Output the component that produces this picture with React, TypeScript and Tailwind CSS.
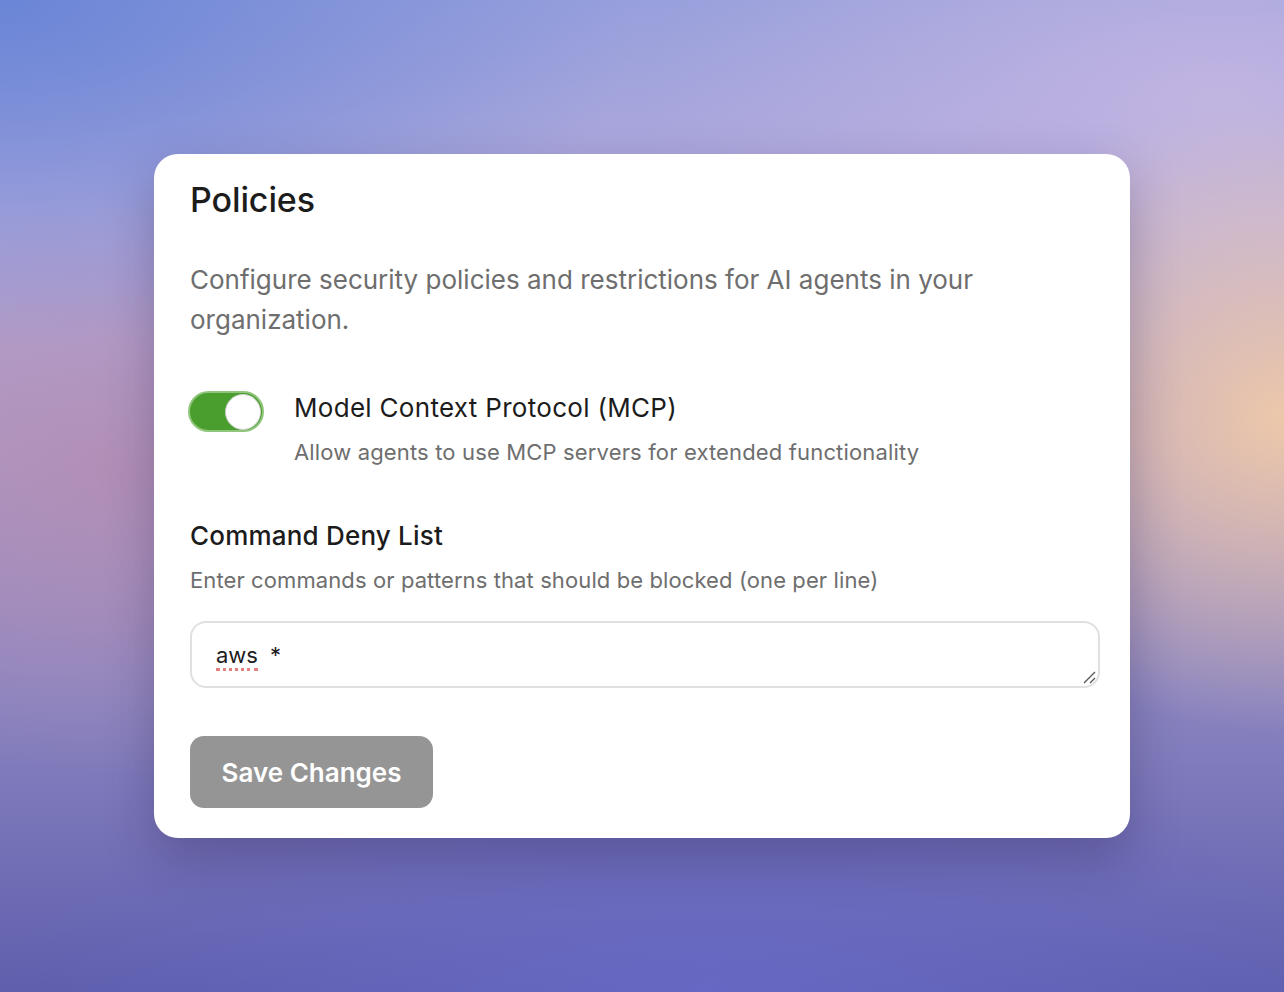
export default function App() {
  return (
    <div
      className="flex h-screen w-full items-center justify-center bg-[radial-gradient(ellipse_28%_32%_at_100%_42%,rgba(240,202,168,0.95),rgba(240,202,168,0)),radial-gradient(ellipse_50%_35%_at_0%_0%,rgba(104,132,214,0.95),rgba(104,132,214,0)),radial-gradient(ellipse_45%_30%_at_95%_10%,rgba(196,182,226,0.9),rgba(196,182,226,0)),radial-gradient(ellipse_35%_30%_at_10%_48%,rgba(178,140,178,0.8),rgba(178,140,178,0)),radial-gradient(ellipse_55%_25%_at_55%_100%,rgba(104,106,200,0.8),rgba(104,106,200,0)),linear-gradient(to_bottom,#98a0dc_0%,#b3aadc_22%,#b09cc8_45%,#8a84c0_70%,#5f5ead_100%)]"
      style={{ fontFamily: "Inter, 'Noto Sans', sans-serif" }}
    >
      <div className="flex h-[684px] w-[976px] flex-col rounded-[24px] bg-white px-[36px] pt-[26px] shadow-[0_20px_50px_rgba(30,20,70,0.28)]">
        <h1 className="text-[34px] leading-[40px] font-medium tracking-[-0.1px] text-[#1c1c1c]">Policies</h1>

        <p className="mt-[40px] w-[800px] text-[26px] leading-[40px] text-[#6e6e6e]">
          Configure security policies and restrictions for AI agents in your organization.
        </p>

        {/* MCP toggle */}
        <div className="mt-[51px] flex items-start">
          <button className="-ml-[2px] flex h-[41px] w-[76px] items-center justify-end rounded-full border-2 border-[#8fc67c] bg-[#4a9e2e] pr-[1px]">
            <span className="h-[36px] w-[36px] rounded-full border border-[#cfcfcf] bg-white" />
          </button>
          <div className="ml-[30px]">
            <div className="text-[26px] leading-[34px] tracking-[0.3px] text-[#1c1c1c]">Model Context Protocol (MCP)</div>
            <div className="mt-[12px] text-[22px] leading-[30px] tracking-[0.15px] text-[#6e6e6e]">
              Allow agents to use MCP servers for extended functionality
            </div>
          </div>
        </div>

        {/* Command deny list */}
        <div className="mt-[52px] text-[26px] leading-[34px] font-medium tracking-[0.2px] text-[#1c1c1c]">Command Deny List</div>
        <div className="mt-[12px] text-[22px] leading-[30px] tracking-[0.1px] text-[#6e6e6e]">
          Enter commands or patterns that should be blocked (one per line)
        </div>

        <div className="relative mt-[26px] h-[67px] w-[910px] rounded-[16px] border-2 border-[#e0e0e0] px-[24px] pt-[17px]">
          <div className="text-[22px] leading-[30px] text-[#1c1c1c]">
            <span className="inline-block border-b-[3px] border-dotted border-[#e48080] leading-[26px]">aws</span>
            <span className="ml-[12px]">*</span>
          </div>
          <svg className="absolute right-[2px] bottom-[2px]" width="14" height="14" viewBox="0 0 14 14">
            <path d="M2 13 L13 2 M8 13 L13 8" stroke="#555" strokeWidth="1.3" />
          </svg>
        </div>

        <button className="mt-[48px] flex h-[72px] w-[243px] items-center justify-center rounded-[14px] bg-[#959595] text-[26px] font-semibold text-white">
          Save Changes
        </button>
      </div>
    </div>
  );
}
